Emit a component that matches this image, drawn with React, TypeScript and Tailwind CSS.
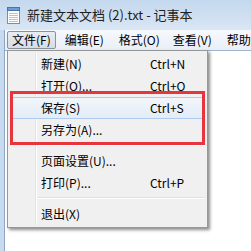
import React from 'react';

const font = { fontFamily: '"Noto Sans CJK SC", "Microsoft YaHei", sans-serif' };

function NoteIcon() {
  return (
    <svg width="15" height="17" viewBox="0 0 15 17">
      <rect x="1.5" y="2.5" width="12" height="14" fill="#ffffff" stroke="#7a8ea6" />
      <rect x="1.5" y="0.5" width="12" height="3" fill="#6c9ed6" stroke="#4a74a8" />
      {[6, 8, 10, 12, 14].map((y) => (
        <line key={y} x1="3" y1={y + 0.5} x2="12" y2={y + 0.5} stroke="#b7c4d4" />
      ))}
    </svg>
  );
}

type Item = { label: string; key?: string; hot?: boolean } | 'sep';

const items: Item[] = [
  { label: '新建(N)', key: 'Ctrl+N' },
  { label: '打开(O)...', key: 'Ctrl+O' },
  { label: '保存(S)', key: 'Ctrl+S', hot: true },
  { label: '另存为(A)...' },
  'sep',
  { label: '页面设置(U)...' },
  { label: '打印(P)...', key: 'Ctrl+P' },
  'sep',
  { label: '退出(X)' },
];

export default function App() {
  return (
    <div className="relative h-[251px] w-[251px] overflow-hidden bg-white text-[12px] text-black" style={font}>
      {/* title bar */}
      <div className="flex h-[30px] items-center gap-[6px] bg-gradient-to-b from-[#c4d8ee] to-[#d9e6f4] pl-[6px]">
        <NoteIcon />
        <span className="whitespace-nowrap text-[13px] text-[#1e1e1e]">新建文本文档 (2).txt - 记事本</span>
      </div>
      <div className="flex h-[221px]">
        <div className="w-[5px] shrink-0 border-r border-[#8ea6c2] bg-[#c6dbf0]" />
        <div className="flex min-w-0 flex-1 flex-col">
          {/* menu bar */}
          <div className="flex h-[20px] items-center whitespace-nowrap bg-gradient-to-b from-[#f6f9fd] to-[#e9eff7] pl-[2px]">
            <div className="flex h-[18px] shrink-0 items-center rounded-[2px] border border-[#8a929c] bg-gradient-to-b from-[#e9edf2] to-[#d6dde6] px-[4px]">文件(F)</div>
            <div className="w-[54px] shrink-0 pl-[9px]">编辑(E)</div>
            <div className="w-[54px] shrink-0 pl-[9px]">格式(O)</div>
            <div className="w-[54px] shrink-0 pl-[9px]">查看(V)</div>
            <div className="shrink-0 pl-[9px]">帮助</div>
          </div>
          <div className="flex-1 border-t border-[#a0b4cc] bg-white" />
        </div>
      </div>

      {/* dropdown */}
      <div className="absolute left-[7px] top-[50px] w-[201px] whitespace-nowrap border border-[#979797] bg-[#f0f0f0] pb-[2px] pt-[2px] shadow-[2px_2px_3px_rgba(0,0,0,0.45)]">
        <div className="absolute bottom-[2px] left-[27px] top-[2px] w-[2px] border-l border-r border-l-[#e2e3e3] border-r-white" />
        {items.map((it, i) =>
          it === 'sep' ? (
            <div key={i} className="mb-[4px] ml-[30px] mr-[2px] mt-[3px] h-[2px] border-t border-b border-t-[#e0e0e0] border-b-white" />
          ) : (
            <div
              key={i}
              className={`relative mx-[2px] flex h-[22px] items-center rounded-[3px] pl-[30px] ${
                it.hot ? 'border border-[#aeccef] bg-gradient-to-b from-[#f2f6fb] to-[#e3ecf7]' : 'border border-transparent'
              }`}
            >
              <span className="w-[109px]">{it.label}</span>
              {it.key && <span>{it.key}</span>}
            </div>
          )
        )}
      </div>

      {/* red highlight box */}
      <div className="absolute left-[10px] top-[91px] h-[54px] w-[195px] border-[3px] border-[#e8343c]" />
    </div>
  );
}
